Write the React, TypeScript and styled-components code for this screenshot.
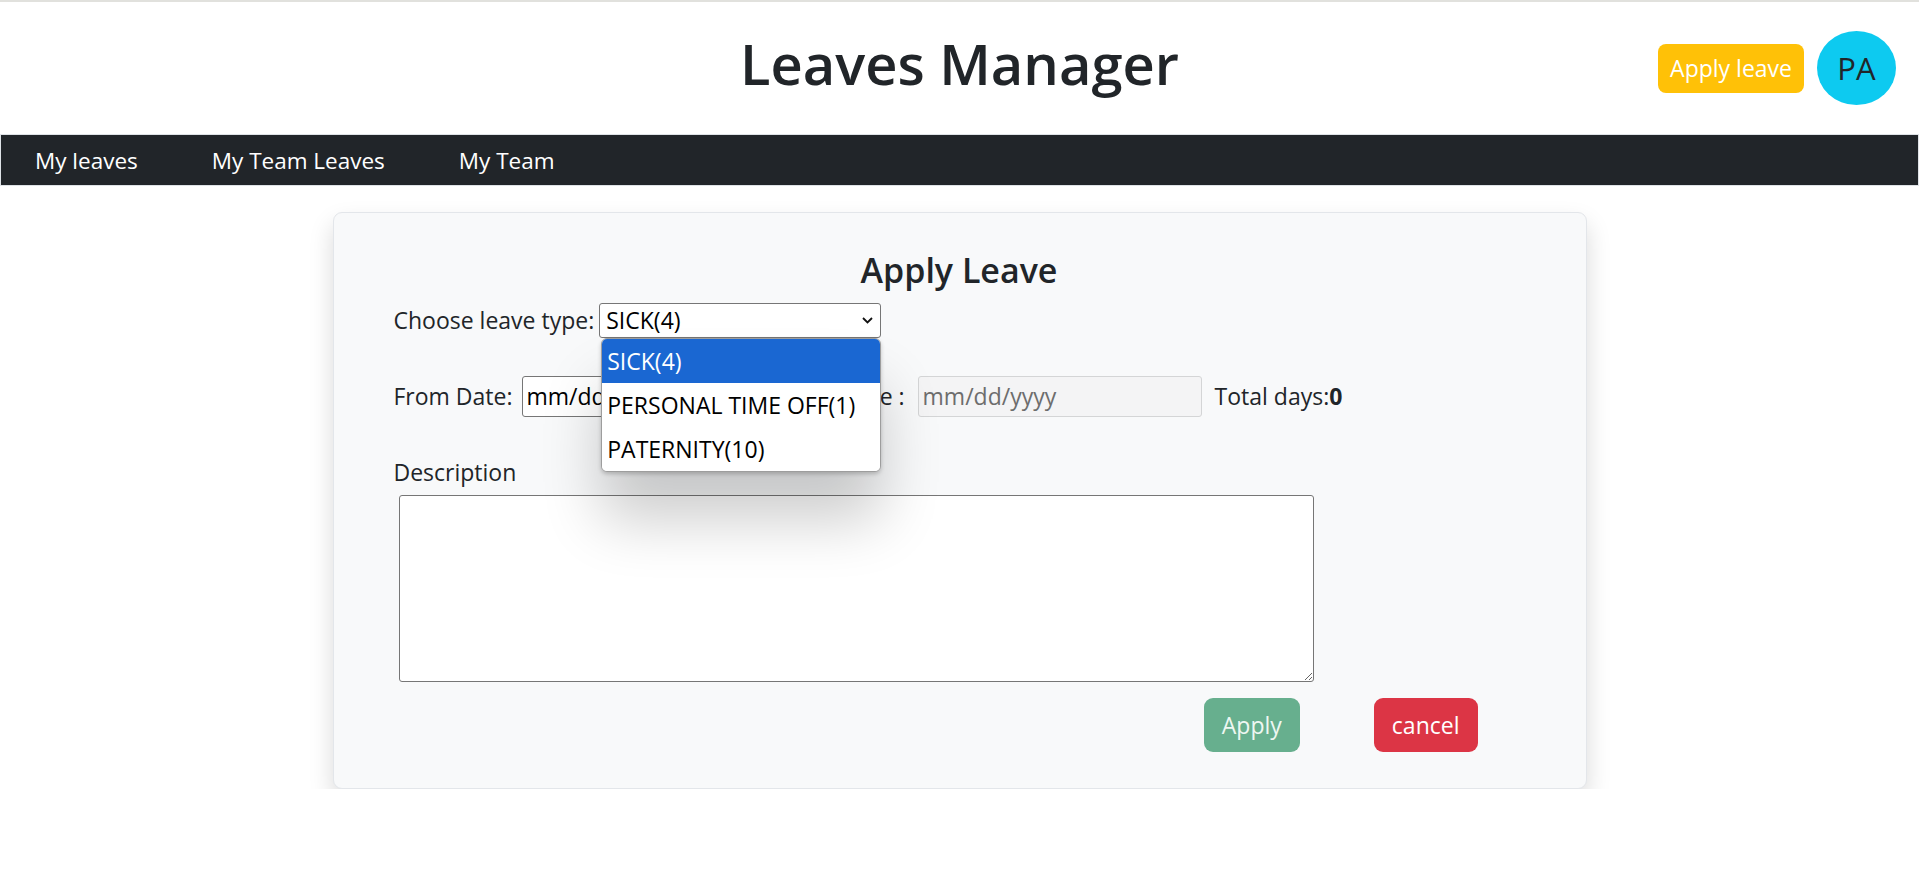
import React from "react";
import styled, { createGlobalStyle } from "styled-components";

const GlobalStyle = createGlobalStyle`
  * { box-sizing: border-box; }
  html, body { margin: 0; padding: 0; background: #fff; }
  body {
    border-top: 2px solid #e1e1dd;
    font-family: "Open Sans", "Noto Sans", sans-serif;
    font-size: 23px;
    color: #212529;
  }
`;

const Header = styled.header`
  height: 132px;
  display: grid;
  grid-template-columns: 1fr auto 1fr;
  align-items: center;
`;

const Title = styled.h1`
  grid-column: 2;
  margin: 0 0 8px;
  font-size: 56px;
  font-weight: 600;
  line-height: 1.2;
  color: #212529;
`;

const HeaderActions = styled.div`
  grid-column: 3;
  justify-self: end;
  display: flex;
  align-items: center;
  gap: 13px;
  padding-right: 23px;
`;

const HeaderButton = styled.button`
  height: 49px;
  padding: 0 12px;
  border: none;
  border-radius: 8px;
  background: #ffc107;
  color: #fff;
  font-family: inherit;
  font-size: 23px;
  line-height: 1;
  cursor: pointer;
`;

const Avatar = styled.div`
  width: 79px;
  height: 74px;
  border-radius: 50%;
  background: #0dcaf0;
  display: flex;
  align-items: center;
  justify-content: center;
  font-size: 31px;
  color: #212529;
`;

const Nav = styled.nav`
  height: 52px;
  background: #212529;
  border: 1px solid #dee2e6;
  display: flex;
  align-items: center;
  gap: 74px;
  padding: 2px 0 0 34px;
`;

const NavLink = styled.a`
  color: #fff;
  text-decoration: none;
  font-size: 22.5px;
  line-height: 1;
`;

const Card = styled.section`
  width: 1254px;
  margin: 26px auto 0;
  background: #f8f9fa;
  border: 1px solid #e3e6ea;
  border-radius: 9px;
  box-shadow: 0 12px 24px rgba(0, 0, 0, 0.15);
  padding: 38px 61px 36px 60px;
`;

const CardTitle = styled.h4`
  margin: 0 0 12px;
  text-align: center;
  font-size: 34px;
  font-weight: 600;
  line-height: 1.17;
  color: #212529;
`;

const Row = styled.div<{ $top?: number; $height: number }>`
  display: flex;
  align-items: center;
  height: ${(p) => p.$height}px;
  margin-top: ${(p) => p.$top ?? 0}px;
`;

const Label = styled.label<{ $left?: number; $right?: number }>`
  margin-left: ${(p) => p.$left ?? 0}px;
  margin-right: ${(p) => p.$right ?? 0}px;
  white-space: nowrap;
`;

const SelectBox = styled.div`
  position: relative;
  width: 282px;
  height: 35px;
  background: #fff;
  border: 1px solid #767676;
  border-radius: 3px;
  display: flex;
  align-items: center;
  justify-content: space-between;
  padding: 0 7px 0 6px;
  color: #000;
`;

const DropList = styled.ul`
  position: absolute;
  top: calc(100% + 1px);
  left: 1px;
  width: 280px;
  margin: 0;
  padding: 0;
  list-style: none;
  background: #fff;
  border: 1px solid #9d9d9d;
  border-radius: 6px;
  overflow: hidden;
  z-index: 10;
  box-shadow: 0 48px 60px rgba(0, 0, 0, 0.2), 0 2px 4px rgba(0, 0, 0, 0.2);
`;

const DropItem = styled.li<{ $selected?: boolean }>`
  height: 44px;
  display: flex;
  align-items: center;
  padding-left: 5px;
  background: ${(p) => (p.$selected ? "#1a67d2" : "#fff")};
  color: ${(p) => (p.$selected ? "#fff" : "#000")};
  white-space: nowrap;
`;

const DateInput = styled.input<{ $disabled?: boolean }>`
  width: 284px;
  height: 41px;
  padding: 0 4px;
  border: 1px solid ${(p) => (p.$disabled ? "#d4d5d6" : "#767676")};
  border-radius: 3px;
  background: ${(p) => (p.$disabled ? "#f4f4f5" : "#fff")};
  color: ${(p) => (p.$disabled ? "#6d6d6d" : "#000")};
  font-family: inherit;
  font-size: 23px;
  outline: none;
`;

const Total = styled.span`
  margin-left: 13px;
  white-space: nowrap;
`;

const DescLabel = styled.label`
  display: block;
  margin-top: 39px;
  line-height: 33px;
`;

const TextArea = styled.textarea`
  display: block;
  width: 915px;
  height: 187px;
  margin: 6px 0 0 5px;
  border: 1px solid #767676;
  border-radius: 3px;
  background: #fff;
  resize: both;
  font-family: inherit;
  font-size: 23px;
`;

const Actions = styled.div`
  display: flex;
  justify-content: flex-end;
  gap: 74px;
  margin-top: 16px;
  padding-right: 47px;
`;

const ActionButton = styled.button<{ $variant: "success" | "danger" }>`
  height: 54px;
  padding: 1px 18px 0;
  border: none;
  border-radius: 9px;
  background: ${(p) => (p.$variant === "success" ? "#67af8e" : "#dc3545")};
  color: ${(p) => (p.$variant === "success" ? "#eef7f2" : "#fff")};
  font-family: inherit;
  font-size: 23px;
  line-height: 1;
`;

const Chevron = () => (
  <svg width="11" height="7" viewBox="0 0 11 7" fill="none">
    <path d="M1 1L5.5 5.5L10 1" stroke="#111" strokeWidth="1.8" />
  </svg>
);

export default function App() {
  return (
    <>
      <GlobalStyle />
      <Header>
        <Title>Leaves Manager</Title>
        <HeaderActions>
          <HeaderButton>Apply leave</HeaderButton>
          <Avatar>PA</Avatar>
        </HeaderActions>
      </Header>
      <Nav>
        <NavLink href="#">My leaves</NavLink>
        <NavLink href="#">My Team Leaves</NavLink>
        <NavLink href="#">My Team</NavLink>
      </Nav>
      <Card>
        <CardTitle>Apply Leave</CardTitle>
        <Row $height={35}>
          <Label $right={5}>Choose leave type:</Label>
          <SelectBox>
            <span>SICK(4)</span>
            <Chevron />
            <DropList>
              <DropItem $selected>SICK(4)</DropItem>
              <DropItem>PERSONAL TIME OFF(1)</DropItem>
              <DropItem>PATERNITY(10)</DropItem>
            </DropList>
          </SelectBox>
        </Row>
        <Row $height={41} $top={38}>
          <Label $right={9}>From Date:</Label>
          <DateInput readOnly value="mm/dd/yyyy" />
          <Label $left={4} $right={13}>To Date :</Label>
          <DateInput $disabled disabled value="mm/dd/yyyy" />
          <Total>
            Total days:<b>0</b>
          </Total>
        </Row>
        <DescLabel>Description</DescLabel>
        <TextArea />
        <Actions>
          <ActionButton $variant="success" disabled>
            Apply
          </ActionButton>
          <ActionButton $variant="danger">cancel</ActionButton>
        </Actions>
      </Card>
    </>
  );
}
